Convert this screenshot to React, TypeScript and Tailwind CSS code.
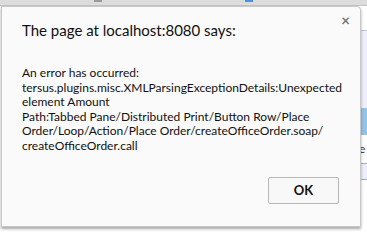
import React from "react";

export default function App() {
  return (
    <div className="relative w-[367px] h-[251px] overflow-hidden bg-white" style={{ fontFamily: 'Lato, "Noto Sans", sans-serif' }}>
      {/* background page */}
      <div className="h-[6px] bg-[#dcdcdc] border-b border-[#c4c4c4] relative">
        <div className="absolute left-[94px] top-0 w-[8px] h-[2px] bg-[#9a9a9a]" />
        <div className="absolute left-[245px] top-0 w-[8px] h-[2px] bg-[#4a8fe0]" />
      </div>
      <div className="absolute right-0 top-[30px] w-[8px] h-[150px] flex flex-col">
        <div className="h-[1px] bg-[#b8c8e0]" />
        <div className="h-[77px] bg-[#eeeefb]" />
        <div className="h-[27px] bg-[#92c4e6]" />
        <div className="h-[28px] bg-white text-[12px] leading-[28px] text-[#333]">e</div>
        <div className="h-[1px] bg-[#9ab0cc]" />
        <div className="flex-1 bg-[#eeeefb]" />
        <div className="h-[1px] bg-[#9ab0cc]" />
      </div>

      {/* dialog */}
      <div className="absolute left-[1px] top-[6px] w-[360px] h-[221px] bg-[#fafafa] border border-[#c8c8c8] rounded-tr-[4px] shadow-[0_2px_3px_rgba(0,0,0,0.35)]">
        <div className="absolute right-[10px] top-[6px] text-[15px] font-bold text-[#777] leading-none">×</div>
        <div className="pl-[20px] pt-[13px] text-[15px] text-[#111] leading-[20px] whitespace-nowrap">The page at localhost:8080 says:</div>
        <div className="pl-[20px] pt-[26px] text-[12px] leading-[14.6px] text-[#111] whitespace-nowrap">
          <div>An error has occurred:</div>
          <div>tersus.plugins.misc.XMLParsingExceptionDetails:Unexpected</div>
          <div>element Amount</div>
          <div>Path:Tabbed Pane/Distributed Print/Button Row/Place</div>
          <div>Order/Loop/Action/Place Order/createOfficeOrder.soap/</div>
          <div>createOfficeOrder.call</div>
        </div>
        <div className="absolute left-[266px] top-[170px] w-[71px] h-[27px] border border-[#b8b8b8] rounded-[2px] bg-[#f8f8f8] flex items-center justify-center text-[13px] font-bold text-[#111]">
          OK
        </div>
      </div>
    </div>
  );
}
